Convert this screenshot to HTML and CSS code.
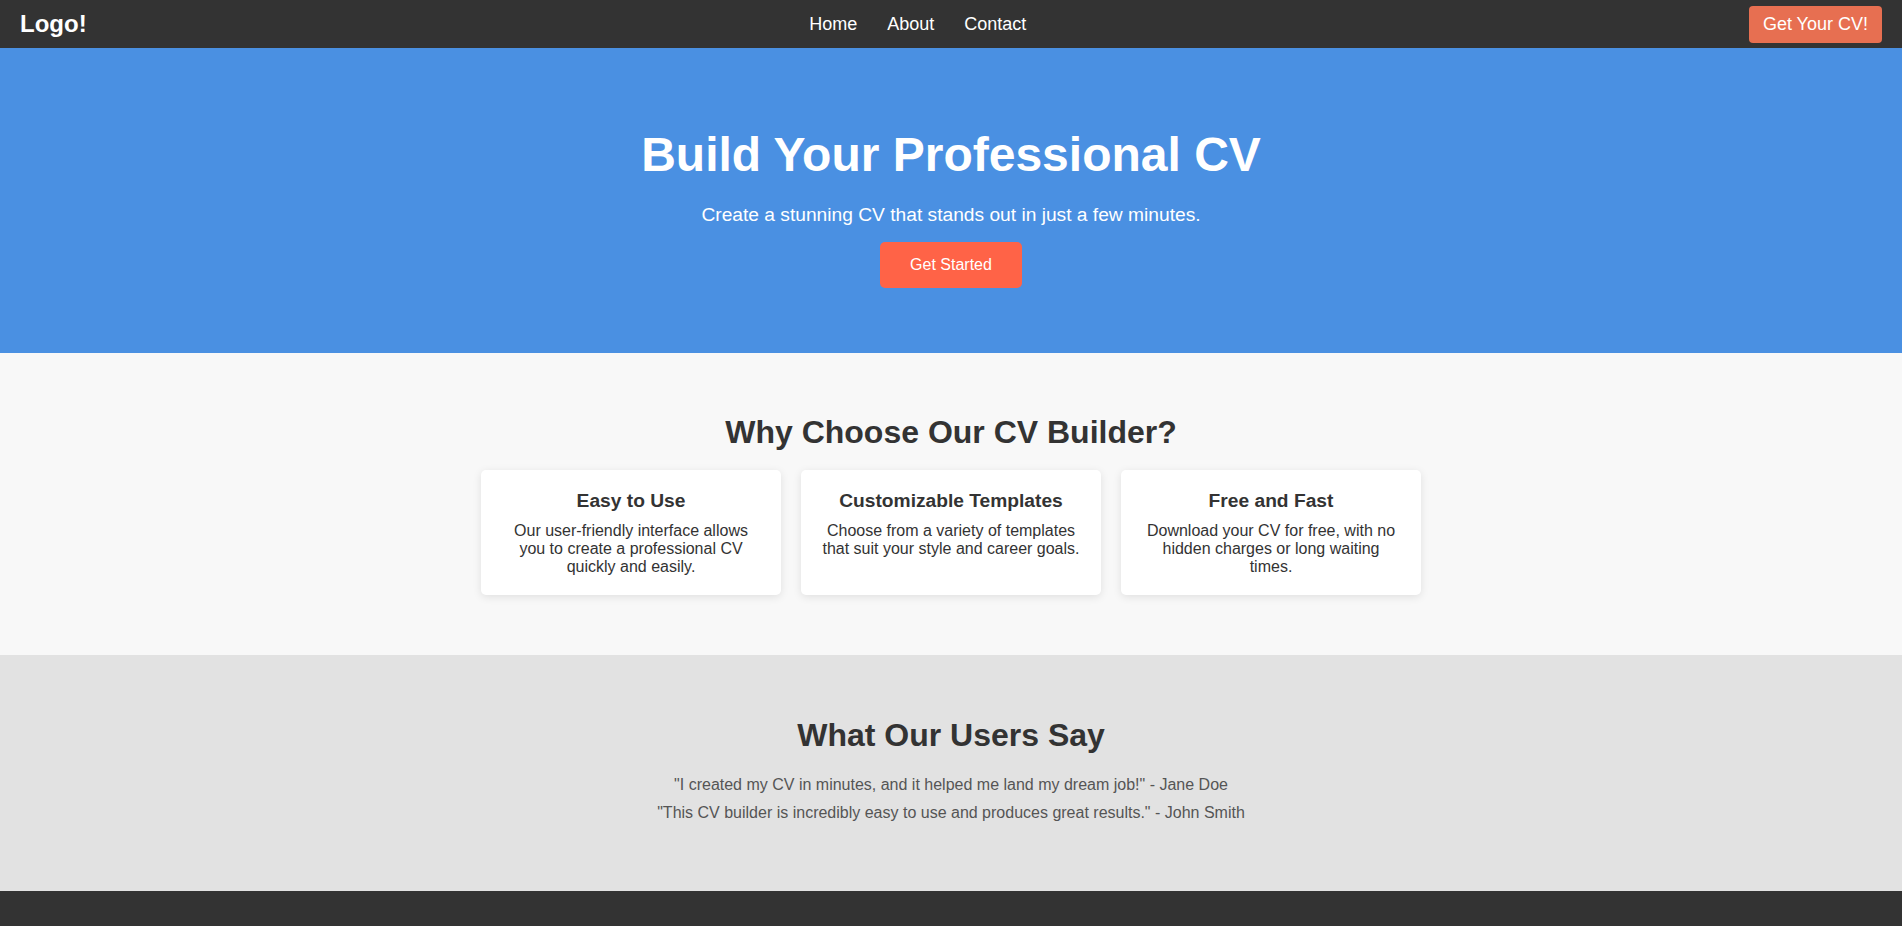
FILE: index.html
```html
<!DOCTYPE html>
<html lang="en">
<head>
<meta charset="utf-8">
<title>CV Builder</title>
<link rel="stylesheet" href="styles.css">
</head>
<body>
<header class="navbar">
  <div class="logo">Logo!</div>
  <nav>
    <ul class="nav-links">
      <li><a href="#">Home</a></li>
      <li><a href="#">About</a></li>
      <li><a href="#">Contact</a></li>
    </ul>
  </nav>
  <a class="nav-cta" href="#">Get Your CV!</a>
</header>

<section class="hero">
  <h1>Build Your Professional CV</h1>
  <p>Create a stunning CV that stands out in just a few minutes.</p>
  <a class="hero-btn" href="#">Get Started</a>
</section>

<section class="features">
  <h2>Why Choose Our CV Builder?</h2>
  <div class="cards">
    <div class="card">
      <h3>Easy to Use</h3>
      <p>Our user-friendly interface allows you to create a professional CV quickly and easily.</p>
    </div>
    <div class="card">
      <h3>Customizable Templates</h3>
      <p>Choose from a variety of templates that suit your style and career goals.</p>
    </div>
    <div class="card">
      <h3>Free and Fast</h3>
      <p>Download your CV for free, with no hidden charges or long waiting times.</p>
    </div>
  </div>
</section>

<section class="testimonials">
  <h2>What Our Users Say</h2>
  <p>"I created my CV in minutes, and it helped me land my dream job!" - Jane Doe</p>
  <p>"This CV builder is incredibly easy to use and produces great results." - John Smith</p>
</section>

<footer class="footer"></footer>
</body>
</html>
```

FILE: styles.css
```css
* {
  box-sizing: border-box;
}

body {
  margin: 0;
  font-family: "Liberation Sans", Arial, sans-serif;
  color: #333;
}

.navbar {
  display: flex;
  justify-content: space-between;
  align-items: center;
  height: 48px;
  padding: 0 20px;
  background: #333;
  color: #fff;
}

.logo {
  font-size: 24px;
  font-weight: bold;
}

.nav-links {
  display: flex;
  list-style: none;
  margin: 0;
  padding: 0;
}

.nav-links a {
  display: block;
  margin: 0 15px;
  font-size: 18px;
  color: #fff;
  text-decoration: none;
}

.nav-cta {
  display: block;
  padding: 8px 14px;
  font-size: 18px;
  color: #fff;
  background: #e76f51;
  border-radius: 4px;
  text-decoration: none;
}

.hero {
  display: flex;
  flex-direction: column;
  align-items: center;
  padding: 79px 20px 65px;
  background: #4a90e2;
  color: #fff;
  text-align: center;
}

.hero h1 {
  margin: 0 0 21.5px;
  font-size: 48px;
}

.hero p {
  margin: 0 0 16px;
  font-size: 19.2px;
}

.hero-btn {
  display: block;
  padding: 14px 30px;
  font-size: 16px;
  color: #fff;
  background: #ff6347;
  border-radius: 5px;
  text-decoration: none;
}

.features {
  padding: 61.5px 20px 60px;
  background: #f8f8f8;
  text-align: center;
}

.features h2,
.testimonials h2 {
  margin: 0 0 19px;
  font-size: 32px;
  color: #333;
}

.cards {
  display: flex;
  justify-content: center;
  gap: 20px;
}

.card {
  width: 300px;
  padding: 20px 20px 19px;
  background: #fff;
  border-radius: 5px;
  box-shadow: 0 2px 8px rgba(0, 0, 0, 0.1);
}

.card h3 {
  margin: 0 0 10px;
  font-size: 19.2px;
}

.card p {
  margin: 0;
  font-size: 16px;
}

.testimonials {
  padding: 61.5px 20px 59px;
  background: #e2e2e2;
  text-align: center;
}

.testimonials h2 {
  margin-bottom: 22px;
}

.testimonials p {
  margin: 10px 0;
  font-size: 16px;
  color: #555;
}

.footer {
  height: 120px;
  background: #333;
}
```
